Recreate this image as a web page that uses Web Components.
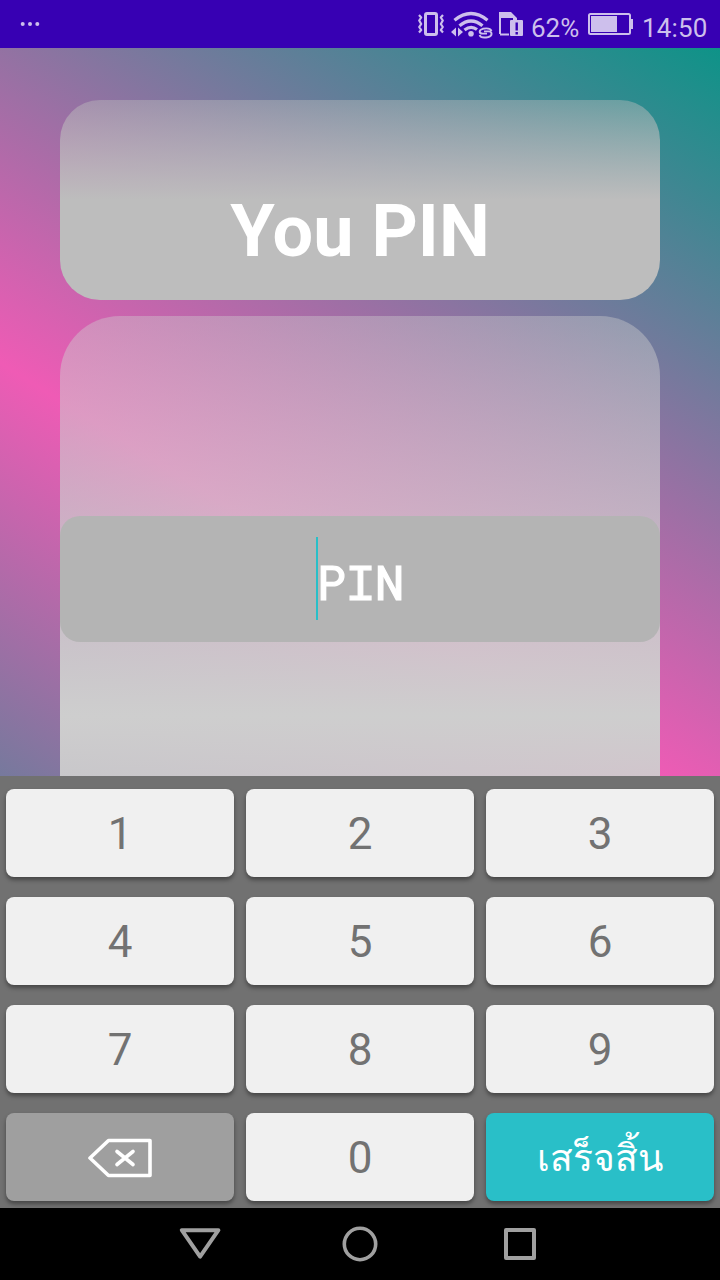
<!DOCTYPE html>
<html lang="th"><head><meta charset="utf-8"><title>PIN</title>
<style>
body{margin:0;width:720px;height:1280px;overflow:hidden;font-family:Roboto,"Noto Sans",sans-serif}
</style></head><body>
<pin-screen></pin-screen>
<script>
const define=(name,html)=>customElements.define(name,class extends HTMLElement{
  constructor(){super();const t=document.createElement('template');t.innerHTML=html;
    this.attachShadow({mode:'open'}).append(t.content.cloneNode(true));}
});

define('status-bar',`<style>
:host{display:flex;height:48px;background:#3700b3;color:#cdbfec;align-items:center;box-sizing:border-box}
svg{display:block;flex:none}
span{font-size:26px;line-height:30px;padding-top:8px;white-space:nowrap}
.pct{width:57px}.time{margin-left:9px;letter-spacing:.15px}
</style>
<svg width="417" height="48" fill="currentColor"><circle cx="22.7" cy="24" r="2"/><circle cx="30" cy="24" r="2"/><circle cx="37.3" cy="24" r="2"/></svg>
<svg width="114" height="48" viewBox="417 0 114 48" fill="none" stroke="currentColor">
<rect x="425.5" y="13.5" width="11" height="21" rx="1.5" stroke-width="3"/>
<path stroke-width="2.2" stroke-linejoin="round" d="M419 15l2.2 2.5-2 3 2 3.5-2 3 2 3-2.2 2.5M443 15l-2.2 2.5 2 3-2 3.5 2 3-2 3 2.2 2.5"/>
<path stroke-width="3.3" d="M454.5 20.3Q471 6.8 487.5 20.3M459.5 25.8Q471 16.3 482.5 25.8M464.5 30Q471 25 477 29.5"/>
<circle cx="471" cy="33.8" r="2.8" fill="currentColor" stroke="none"/>
<path d="M456 27.5v9l-5-4.5zM458 27.5v9l5-4.5z" fill="currentColor" stroke="none"/>
<path stroke-width="1.9" d="M491.5 31C490.5 28.4 486 28.2 482.8 28.8C478.5 30 478.8 33.6 482.8 33.6H487M479.6 35C480.6 38 485 37.8 488.4 37C492.8 35.6 492.4 31.4 488.4 31.4H484"/>
<path d="M499 12H511L517 18V20H513V18H501V34H499z" fill="currentColor" stroke="none"/>
<path stroke-width="2" d="M500 34.5H509"/>
<rect x="510" y="20" width="13" height="16" rx="1" fill="currentColor" stroke="none"/>
<path d="M516.7 22.5v8M516.7 32v2.5" stroke="#3700b3" stroke-width="2.4"/>
</svg>
<span class="pct">62%</span>
<svg width="45" height="48" viewBox="588 0 45 48"><rect x="589" y="14" width="41" height="20" rx="1.5" fill="none" stroke="currentColor" stroke-width="2"/><path d="M591 16h26v16h-26zM631 19h2v10h-2z" fill="currentColor"/></svg>
<span class="time">14:50</span>`);

define('title-card',`<style>
:host{display:flex;height:200px;box-sizing:border-box;padding-top:90px;justify-content:center;border-radius:40px;color:#fff;
font-size:72px;line-height:84px;font-weight:700;white-space:nowrap;background:linear-gradient(rgba(189,189,189,.42),#bdbdbd 50%,#bdbdbd)}
</style><slot></slot>`);

define('pin-field',`<style>
:host{display:flex;height:126px;border-radius:20px;background:#b4b4b4;align-items:center;justify-content:center;color:#fff}
i{width:2px;height:83px;background:#29bfc8;margin-bottom:2px}
span{font:48.6px/56px "Roboto Mono","DejaVu Sans Mono",monospace;-webkit-text-stroke:1.2px #fff;margin:4px 0 0 -1px}
</style><i></i><span><slot></slot></span>`);

define('form-card',`<style>
:host{display:block;height:800px;box-sizing:border-box;padding-top:200px;border-radius:60px;
background:linear-gradient(rgba(206,206,206,.4),#cecece 50%,rgba(206,206,206,.5))}
</style><slot></slot>`);

define('pin-key',`<style>
:host{display:flex;align-items:center;justify-content:center;height:88px;border-radius:8px;background:#f0f0f0;color:#727272;
font-size:44px;line-height:52px;box-shadow:0 3px 4px rgba(0,0,0,.38);box-sizing:border-box;padding-top:2px}
:host([kind=delete]){background:#9f9f9f}
:host([kind=done]){background:#29bfc8;color:#fff;font-size:37.2px;padding:1px 0 0}
svg{display:block}
</style><slot></slot>`);

define('key-pad',`<style>
:host{display:grid;grid-template-columns:repeat(3,228px);grid-auto-rows:88px;gap:20px 12px;height:432px;box-sizing:border-box;padding:13px 6px 0;background:#717171;overflow:hidden}
svg{display:block}
</style>
<pin-key>1</pin-key><pin-key>2</pin-key><pin-key>3</pin-key>
<pin-key>4</pin-key><pin-key>5</pin-key><pin-key>6</pin-key>
<pin-key>7</pin-key><pin-key>8</pin-key><pin-key>9</pin-key>
<pin-key kind="delete"><svg width="64" height="40" viewBox="0 0 64 40" fill="none" stroke="#fff" stroke-width="3.6" stroke-linejoin="round" stroke-linecap="round"><path d="M20.5 2.5H62V37.5H20.5L2 20z"/><path d="M29 13.5l16 13M45 13.5l-16 13"/></svg></pin-key>
<pin-key>0</pin-key><pin-key kind="done">เสร็จสิ้น</pin-key>`);

define('nav-bar',`<style>
:host{display:flex;height:72px;background:#000;justify-content:center;align-items:center;gap:120px}
svg{display:block;fill:none;stroke:#a0a0a0;stroke-width:4;stroke-linejoin:round}
</style>
<svg width="40" height="40" overflow="visible"><path d="M1.8 6.2H38.4L20.1 32.7z"/></svg>
<svg width="40" height="40"><circle cx="20" cy="20" r="15.7" stroke-width="3.6"/></svg>
<svg width="40" height="40"><path d="M6 6H34V34H6z"/></svg>`);

define('pin-screen',`<style>
:host{display:flex;flex-direction:column;height:1280px}
main{height:728px;box-sizing:border-box;padding:52px 60px 0;overflow:hidden;display:flex;flex-direction:column;gap:16px;
background:linear-gradient(212.2deg,#0e9388 0,#ef5bb5 650px,#0e9388 1300px)}
main>*{flex:none}
</style>
<status-bar></status-bar>
<main><title-card>You PIN</title-card><form-card><pin-field>PIN</pin-field></form-card></main>
<key-pad></key-pad><nav-bar></nav-bar>`);
</script></body></html>
